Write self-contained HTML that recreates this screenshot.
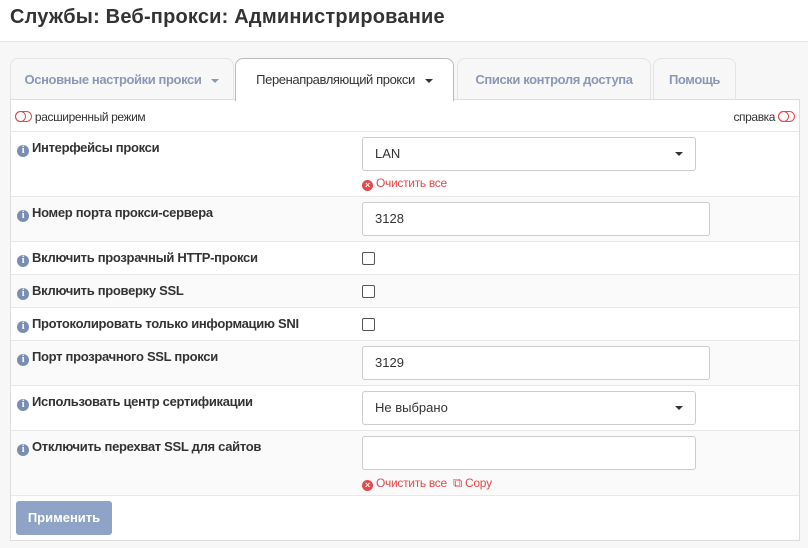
<!DOCTYPE html>
<html><head><meta charset="utf-8"><style>
*{box-sizing:border-box;margin:0;padding:0}
body{width:808px;height:548px;background:#f7f7f7;font-family:"Liberation Sans",sans-serif;position:relative;overflow:hidden;color:#333}
.a{position:absolute}
.top{left:0;top:0;width:808px;height:42px;background:#fff;border-bottom:1px solid #e6e6e6}
.title{left:10px;top:6px;font-size:20px;font-weight:bold;color:#333;letter-spacing:0.2px}
.tab{top:58px;height:42px;border:1px solid #e4e4e4;border-bottom:none;border-radius:8px 8px 0 0;background:#f7f7f7;font-size:13px;color:#8a98b6;line-height:42px;text-align:center;letter-spacing:-0.4px;font-weight:bold}
.tab.act{background:#fff;color:#333;border-color:#bbb;font-weight:normal;height:43px;z-index:2}
.car{display:inline-block;width:0;height:0;border-left:4px solid transparent;border-right:4px solid transparent;border-top:4px solid currentColor;vertical-align:middle;margin-left:10px}
.panel{left:10px;top:99px;width:790px;height:442px;background:#fff;border:1px solid #ddd}
.row{left:0;width:788px;border-bottom:1px solid #e8e8e8}
.g{background:#fafafa}
.lab{left:6px;font-size:13px;font-weight:bold;color:#333;letter-spacing:-0.3px}
.i{display:inline-block;width:12px;height:12px;border-radius:50%;background:#7a8fb0;color:#fff;font-size:10px;line-height:12px;text-align:center;font-family:"Liberation Serif",serif;font-weight:bold;margin-right:3px;vertical-align:-1px}
.inp{left:351px;height:34px;border:1px solid #ccc;border-radius:3px;background:#fff;font-size:13px;line-height:32px;padding-left:12px;color:#333}
.cb{left:351px;width:13px;height:13px;border:1px solid #555;border-radius:2px;background:#fff}
.red{color:#e4494b;font-size:12px;letter-spacing:-0.3px}
.x{display:inline-block;width:11px;height:11px;border-radius:50%;background:#e4494b;color:#fff;font-size:9px;line-height:11px;text-align:center;font-weight:bold;margin-right:3px;vertical-align:-1px}
.tog{display:inline-block;width:17px;height:11px;border:1px solid #e4494b;border-radius:6px;position:relative;vertical-align:-1px}
.tog:after{content:"";position:absolute;left:0;top:0;width:9px;height:9px;border:1px solid #e4494b;border-radius:50%;margin:-1px}
.selc{position:absolute;right:12px;top:14px;border-left:4px solid transparent;border-right:4px solid transparent;border-top:4px solid #333}
.btn{left:5px;top:401px;width:96px;height:34px;background:#8fa3c6;border-radius:3px;color:#fff;font-weight:bold;font-size:13px;line-height:34px;text-align:center}
.sm{font-size:12px;color:#333;letter-spacing:-0.4px}
</style></head><body>
<div class="a top"></div>
<div class="a title">Службы: Веб-прокси: Администрирование</div>
<div class="a tab" style="left:10px;width:224px">Основные настройки прокси<span class="car"></span></div>
<div class="a tab act" style="left:235px;width:219px">Перенаправляющий прокси<span class="car" style="color:#333"></span></div>
<div class="a tab" style="left:457px;width:194px">Списки контроля доступа</div>
<div class="a tab" style="left:653px;width:83px">Помощь</div>
<div class="a panel">
 <div class="a row" style="top:0;height:32px"></div>
 <div class="a sm" style="left:4px;top:10px"><span class="tog"></span> расширенный режим</div>
 <div class="a sm" style="right:4px;top:10px">справка <span class="tog"></span></div>

 <div class="a row" style="top:32px;height:65px"></div>
 <div class="a lab" style="top:40px"><span class="i">i</span>Интерфейсы прокси</div>
 <div class="a inp" style="top:37px;width:334px">LAN<span class="selc"></span></div>
 <div class="a red" style="left:351px;top:76px"><span class="x">×</span>Очистить все</div>

 <div class="a row g" style="top:97px;height:45px"></div>
 <div class="a lab" style="top:105px"><span class="i">i</span>Номер порта прокси-сервера</div>
 <div class="a inp" style="top:102px;width:348px">3128</div>

 <div class="a row" style="top:142px;height:33px"></div>
 <div class="a lab" style="top:150px"><span class="i">i</span>Включить прозрачный HTTP-прокси</div>
 <div class="a cb" style="top:152px"></div>

 <div class="a row g" style="top:175px;height:33px"></div>
 <div class="a lab" style="top:183px"><span class="i">i</span>Включить проверку SSL</div>
 <div class="a cb" style="top:185px"></div>

 <div class="a row" style="top:208px;height:33px"></div>
 <div class="a lab" style="top:216px"><span class="i">i</span>Протоколировать только информацию SNI</div>
 <div class="a cb" style="top:218px"></div>

 <div class="a row g" style="top:241px;height:45px"></div>
 <div class="a lab" style="top:249px"><span class="i">i</span>Порт прозрачного SSL прокси</div>
 <div class="a inp" style="top:246px;width:348px">3129</div>

 <div class="a row" style="top:286px;height:45px"></div>
 <div class="a lab" style="top:294px"><span class="i">i</span>Использовать центр сертификации</div>
 <div class="a inp" style="top:291px;width:334px">Не выбрано<span class="selc"></span></div>

 <div class="a row g" style="top:331px;height:65px"></div>
 <div class="a lab" style="top:339px"><span class="i">i</span>Отключить перехват SSL для сайтов</div>
 <div class="a inp" style="top:336px;width:334px"></div>
 <div class="a red" style="left:351px;top:375px"><span class="x">×</span>Очистить все &nbsp;<span style="font-size:13px">⧉</span> Copy</div>

 <div class="a btn">Применить</div>
</div>
</body></html>
